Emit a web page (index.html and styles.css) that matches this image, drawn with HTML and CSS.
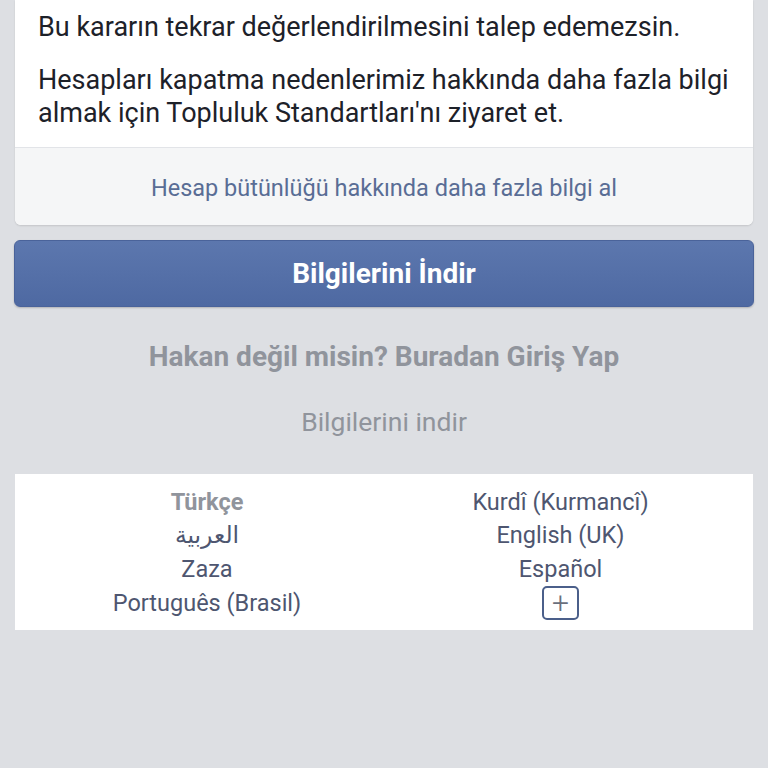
FILE: index.html
```html
<!DOCTYPE html>
<html lang="tr">
<head>
	<meta charset="UTF-8">
	<title>Bilgilerini İndir</title>
	<link rel="stylesheet" href="styles.css">
</head>
<body>
	<main class="page">
		<section class="card">
			<div class="card-body">
				<p>Bu kararın tekrar değerlendirilmesini talep edemezsin.</p>
				<p>Hesapları kapatma nedenlerimiz hakkında daha fazla bilgi almak için Topluluk Standartları'nı ziyaret et.</p>
			</div>
			<a class="card-link" href="#">Hesap bütünlüğü hakkında daha fazla bilgi al</a>
		</section>
		<button class="btn-download">Bilgilerini İndir</button>
		<a class="switch" href="#">Hakan değil misin? Buradan Giriş Yap</a>
		<a class="download-link" href="#">Bilgilerini indir</a>
		<ul class="langs">
			<li class="current">Türkçe</li>
			<li>Kurdî (Kurmancî)</li>
			<li lang="ar">العربية</li>
			<li>English (UK)</li>
			<li>Zaza</li>
			<li>Español</li>
			<li>Português (Brasil)</li>
			<li><span class="more">+</span></li>
		</ul>
	</main>
</body>
</html>
```

FILE: styles.css
```css
html, body {
	background: #dddfe3;
	margin: 0;
	padding: 0;
}
body {
	font-family: Roboto, "Noto Sans", "DejaVu Sans", sans-serif;
}
main.page {
	display: flex;
	flex-direction: column;
	padding: 0 15px;
}
section.card {
	background: #fff;
	border-radius: 0 0 6px 6px;
	box-shadow: 0 1px 2px rgba(0,0,0,.12);
	display: flex;
	flex-direction: column;
	overflow: hidden;
}
.card-body {
	padding: 11px 23px 17px;
}
.card-body p {
	color: #1d2129;
	font-size: 27px;
	line-height: 33px;
	margin: 0 0 20px;
}
.card-body p:last-child {
	margin-bottom: 0;
}
a.card-link {
	background: #f5f6f7;
	border-top: 1px solid #e2e4e8;
	color: #596d95;
	font-size: 23.5px;
	height: 73px;
	line-height: 73px;
	padding-top: 4px;
	text-align: center;
	text-decoration: none;
}
button.btn-download {
	background: linear-gradient(#5c77ae, #4e69a2);
	border: 1px solid #4a639a;
	border-radius: 6px;
	box-shadow: 0 1px 2px rgba(0,0,0,.2);
	color: #fff;
	font: 700 28px Roboto, "Noto Sans", sans-serif;
	height: 67px;
	margin: 15px -1px 0;
}
a.switch {
	color: #90949c;
	font-size: 28px;
	font-weight: 700;
	margin-top: 33px;
	text-align: center;
	text-decoration: none;
}
a.download-link {
	color: #90949c;
	font-size: 26.5px;
	margin-top: 33px;
	text-align: center;
	text-decoration: none;
}
ul.langs {
	background: #fff;
	display: grid;
	grid-template-columns: 1fr 1fr;
	grid-auto-rows: 33.6px;
	list-style: none;
	margin: 37px 0 0;
	padding: 11px 0 11px;
}
ul.langs li {
	align-items: center;
	color: #4e5670;
	display: flex;
	font-size: 23.5px;
	justify-content: center;
	padding-left: 15px;
}
ul.langs li:nth-child(even) {
	padding-left: 0;
	padding-right: 16px;
}
ul.langs li.current {
	color: #90949c;
	font-weight: 700;
}
span.more {
	border: 2px solid #4b5f8a;
	border-radius: 5px;
	box-sizing: border-box;
	color: #6a6f7c;
	font-size: 30px;
	font-weight: 300;
	height: 34px;
	line-height: 30px;
	text-align: center;
	width: 37px;
}
```
